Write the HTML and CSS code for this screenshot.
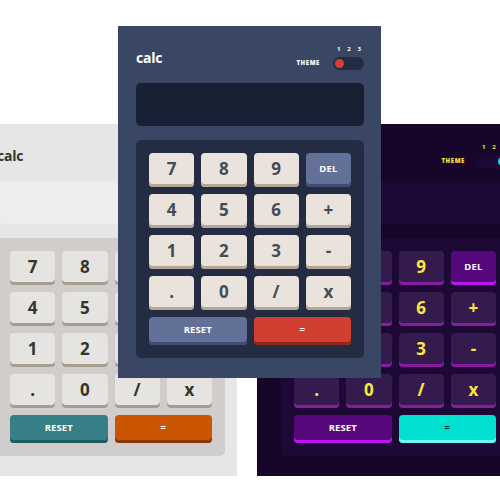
FILE: index.html
```html
<!DOCTYPE html>
<html>
<head>
<meta charset="utf-8">
<link rel="stylesheet" href="styles.css">
</head>
<body>
<div class="stage">
  <div class="calc theme2 pos-left">
    <div class="header">
      <div class="logo">calc</div>
      <div class="theme">
        <span class="theme-label">THEME</span>
        <div class="toggle-wrap">
          <div class="nums"><span>1</span><span>2</span><span>3</span></div>
          <div class="toggle"><span class="knob"></span></div>
        </div>
      </div>
    </div>
    <div class="screen"></div>
    <div class="keypad">
      <button class="key">7</button><button class="key">8</button><button class="key">9</button><button class="key key-alt small">DEL</button>
      <button class="key">4</button><button class="key">5</button><button class="key">6</button><button class="key">+</button>
      <button class="key">1</button><button class="key">2</button><button class="key">3</button><button class="key">-</button>
      <button class="key">.</button><button class="key">0</button><button class="key">/</button><button class="key">x</button>
      <button class="key key-alt small wide">RESET</button><button class="key key-eq small wide">=</button>
    </div>
  </div>

  <div class="calc theme3 pos-right">
    <div class="header">
      <div class="logo">calc</div>
      <div class="theme">
        <span class="theme-label">THEME</span>
        <div class="toggle-wrap">
          <div class="nums"><span>1</span><span>2</span><span>3</span></div>
          <div class="toggle"><span class="knob"></span></div>
        </div>
      </div>
    </div>
    <div class="screen"></div>
    <div class="keypad">
      <button class="key">7</button><button class="key">8</button><button class="key">9</button><button class="key key-alt small">DEL</button>
      <button class="key">4</button><button class="key">5</button><button class="key">6</button><button class="key">+</button>
      <button class="key">1</button><button class="key">2</button><button class="key">3</button><button class="key">-</button>
      <button class="key">.</button><button class="key">0</button><button class="key">/</button><button class="key">x</button>
      <button class="key key-alt small wide">RESET</button><button class="key key-eq small wide">=</button>
    </div>
  </div>

  <div class="calc theme1 pos-center">
    <div class="header">
      <div class="logo">calc</div>
      <div class="theme">
        <span class="theme-label">THEME</span>
        <div class="toggle-wrap">
          <div class="nums"><span>1</span><span>2</span><span>3</span></div>
          <div class="toggle"><span class="knob"></span></div>
        </div>
      </div>
    </div>
    <div class="screen"></div>
    <div class="keypad">
      <button class="key">7</button><button class="key">8</button><button class="key">9</button><button class="key key-alt small">DEL</button>
      <button class="key">4</button><button class="key">5</button><button class="key">6</button><button class="key">+</button>
      <button class="key">1</button><button class="key">2</button><button class="key">3</button><button class="key">-</button>
      <button class="key">.</button><button class="key">0</button><button class="key">/</button><button class="key">x</button>
      <button class="key key-alt small wide">RESET</button><button class="key key-eq small wide">=</button>
    </div>
  </div>
</div>
</body>
</html>
```
FILE: styles.css
```css
html, body {
  margin: 0;
  padding: 0;
  background: #ffffff;
}
body {
  width: 500px;
  height: 500px;
  overflow: hidden;
  font-family: "Open Sans", "DejaVu Sans", sans-serif;
}
.stage {
  position: relative;
  width: 500px;
  height: 500px;
  overflow: hidden;
}
.calc {
  position: absolute;
  box-sizing: border-box;
  height: 352px;
  padding: 20px 17px 20px 18px;
  display: flex;
  flex-direction: column;
}
.pos-center { left: 118px; top: 26px; width: 263px; }
.pos-left { left: -21px; top: 124px; width: 258px; padding-right: 12px; }
.pos-right { left: 257px; top: 124px; width: 270px; padding-left: 24px; }

.header {
  width: 228px;
  height: 24px;
  display: flex;
  justify-content: space-between;
  align-items: flex-end;
  margin-bottom: 13px;
}
.logo {
  font-size: 14px;
  line-height: 14px;
  font-weight: 700;
  letter-spacing: -0.2px;
  margin-bottom: 5px;
}
.theme {
  display: flex;
  align-items: flex-end;
}
.theme-label {
  font-size: 6px;
  line-height: 6px;
  font-weight: 800;
  letter-spacing: 0.6px;
  margin-right: 13px;
  margin-bottom: 4px;
}
.toggle-wrap {
  display: flex;
  flex-direction: column;
  width: 31px;
}
.nums {
  display: flex;
  justify-content: space-between;
  padding: 0 3px 0 4px;
  font-size: 6px;
  line-height: 6px;
  font-weight: 700;
  margin-bottom: 5px;
}
.toggle {
  height: 13px;
  border-radius: 7px;
  display: flex;
  align-items: center;
  padding: 0 2px;
}
.knob {
  width: 9px;
  height: 9px;
  border-radius: 50%;
}
.screen {
  width: 228px;
  height: 43px;
  border-radius: 5px;
  margin-bottom: 14px;
}
.keypad {
  box-sizing: border-box;
  width: 228px;
  height: 218px;
  border-radius: 5px;
  padding: 13px 13px 13px 13px;
  display: grid;
  grid-template-columns: repeat(4, 1fr);
  grid-template-rows: repeat(4, 34px) 28px;
  gap: 7px;
}
.key {
  border: 0;
  margin: 0;
  padding: 0 0 3px 0;
  border-radius: 4px;
  font-family: "Open Sans", "DejaVu Sans", sans-serif;
  font-size: 17px;
  font-weight: 700;
  display: flex;
  align-items: center;
  justify-content: center;
}
.small {
  font-size: 9.5px;
  letter-spacing: 0.1px;
}
.wide {
  grid-column: span 2;
}

/* Theme 1 */
.theme1 { background: #3a4764; color: #ffffff; }
.theme1 .toggle { background: #232c43; }
.theme1 .knob { background: #d03f2f; }
.theme1 .screen { background: #182034; }
.theme1 .keypad { background: #232c43; }
.theme1 .key { background: #eae3dc; color: #444b5a; box-shadow: inset 0 -3px 0 #b4a597; }
.theme1 .key-alt { background: #637097; color: #ffffff; box-shadow: inset 0 -3px 0 #404e72; }
.theme1 .key-eq { background: #d03f2f; color: #ffffff; box-shadow: inset 0 -3px 0 #93261a; }

/* Theme 2 */
.theme2 { background: #e6e6e6; color: #35352c; }
.theme2 .toggle { background: #d2cdcd; justify-content: center; }
.theme2 .knob { background: #ca5502; }
.theme2 .screen { background: #ededed; }
.theme2 .keypad { background: #d2cdcd; }
.theme2 .key { background: #e5e4e0; color: #35352c; box-shadow: inset 0 -3px 0 #a69d91; }
.theme2 .key-alt { background: #377f86; color: #ffffff; box-shadow: inset 0 -3px 0 #1b5f65; }
.theme2 .key-eq { background: #ca5502; color: #ffffff; box-shadow: inset 0 -3px 0 #893901; }

/* Theme 3 */
.theme3 { background: #17062a; color: #ffe53d; }
.theme3 .toggle { background: #1e0836; justify-content: flex-end; }
.theme3 .knob { background: #00e0d1; }
.theme3 .screen { background: #1e0836; }
.theme3 .keypad { background: #1e0836; }
.theme3 .key { background: #331b4d; color: #ffe53d; box-shadow: inset 0 -3px 0 #881c9e; }
.theme3 .key-alt { background: #56077c; color: #ffffff; box-shadow: inset 0 -3px 0 #be15f4; }
.theme3 .key-eq { background: #00e0d1; color: #1a2327; box-shadow: inset 0 -3px 0 #6cf9f2; }
```
